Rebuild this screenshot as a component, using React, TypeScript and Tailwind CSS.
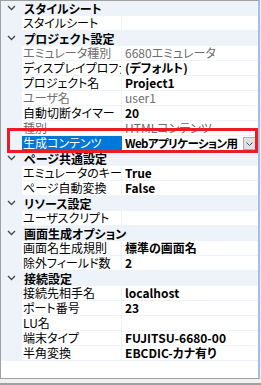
import React from 'react';

type Row =
  | { kind: 'cat'; label: string }
  | { kind: 'prop'; label: string; value?: string; dim?: boolean; selected?: boolean; dropdown?: boolean };

const rows: Row[] = [
  { kind: 'cat', label: 'スタイルシート' },
  { kind: 'prop', label: 'スタイルシート' },
  { kind: 'cat', label: 'プロジェクト設定' },
  { kind: 'prop', label: 'エミュレータ種別', value: '6680エミュレータ', dim: true },
  { kind: 'prop', label: 'ディスプレイプロファイル', value: '(デフォルト)' },
  { kind: 'prop', label: 'プロジェクト名', value: 'Project1' },
  { kind: 'prop', label: 'ユーザ名', value: 'user1', dim: true },
  { kind: 'prop', label: '自動切断タイマー', value: '20' },
  { kind: 'prop', label: '種別', value: 'HTMLコンテンツ', dim: true },
  { kind: 'prop', label: '生成コンテンツ', value: 'Webアプリケーション用', selected: true, dropdown: true },
  { kind: 'cat', label: 'ページ共通設定' },
  { kind: 'prop', label: 'エミュレータのキー入力', value: 'True' },
  { kind: 'prop', label: 'ページ自動変換', value: 'False' },
  { kind: 'cat', label: 'リソース設定' },
  { kind: 'prop', label: 'ユーザスクリプト' },
  { kind: 'cat', label: '画面生成オプション' },
  { kind: 'prop', label: '画面名生成規則', value: '標準の画面名' },
  { kind: 'prop', label: '除外フィールド数', value: '2' },
  { kind: 'cat', label: '接続設定' },
  { kind: 'prop', label: '接続先相手名', value: 'localhost' },
  { kind: 'prop', label: 'ポート番号', value: '23' },
  { kind: 'prop', label: 'LU名' },
  { kind: 'prop', label: '端末タイプ', value: 'FUJITSU-6680-00' },
  { kind: 'prop', label: '半角変換', value: 'EBCDIC-カナ有り' },
];

const Chevron = () => (
  <svg width="9" height="6" viewBox="0 0 9 6" className="mt-[-2px]">
    <polyline points="1,1 4.5,4.5 8,1" fill="none" stroke="#4a4a4a" strokeWidth="1.4" />
  </svg>
);

export default function App() {
  return (
    <div
      className="relative w-[261px] h-[385px] bg-[#f0f0f0] border-b-2 border-[#a0a0a0] text-[12px] leading-[14px] text-black [font-feature-settings:'palt']"
      style={{ fontFamily: '"Noto Sans CJK JP", "Noto Sans", sans-serif' }}
    >
      <div className="w-[260px] h-[379px] bg-white border-l border-t border-b border-[#a0a0a0] border-r-2 border-r-[#9cc0e8]">
        <div className="bg-[#eef3fa]">
          {rows.map((r, i) =>
            r.kind === 'cat' ? (
              <div key={i} className="flex h-[15px] items-center">
                <div className="w-[21px] flex justify-center">
                  <Chevron />
                </div>
                <span className="pl-[2px] font-bold whitespace-nowrap">{r.label}</span>
              </div>
            ) : (
              <div key={i} className="flex h-[15px]">
                <div className="w-[21px] shrink-0" />
                <div
                  className={`w-[99px] h-[14px] shrink-0 pl-[1px] overflow-hidden whitespace-nowrap ${
                    r.selected ? 'bg-[#0078d7] text-white' : r.dim ? 'bg-white text-[#6d6d6d]' : 'bg-white'
                  }`}
                >
                  {r.label}
                </div>
                <div className={`w-px h-[14px] shrink-0 ${r.selected ? 'bg-[#0078d7]' : ''}`} />
                <div className="flex-1 min-w-0 h-[14px] bg-white pl-[3px] flex items-center gap-[2px]">
                  <span
                    className={`flex-1 min-w-0 overflow-hidden whitespace-nowrap ${
                      r.dim ? 'text-[#6d6d6d]' : 'font-bold'
                    } ${r.dropdown ? 'text-[11.5px] tracking-[-0.6px]' : ''}`}
                  >
                    {r.value ?? ''}
                  </span>
                  {r.dropdown && (
                    <div className="w-[13px] h-[13px] shrink-0 mr-[2px] mt-[1px] bg-[#e1e1e1] border border-[#adadad] flex items-center justify-center">
                      <svg width="7" height="4" viewBox="0 0 7 4">
                        <polyline points="0.5,0.5 3.5,3.5 6.5,0.5" fill="none" stroke="#555" strokeWidth="1" />
                      </svg>
                    </div>
                  )}
                </div>
              </div>
            )
          )}
        </div>
      </div>
      {/* red annotation frame */}
      <div className="absolute left-[7px] top-[128px] w-[251px] h-[25px] border-[3px] border-[#ec1c24]" />
    </div>
  );
}
